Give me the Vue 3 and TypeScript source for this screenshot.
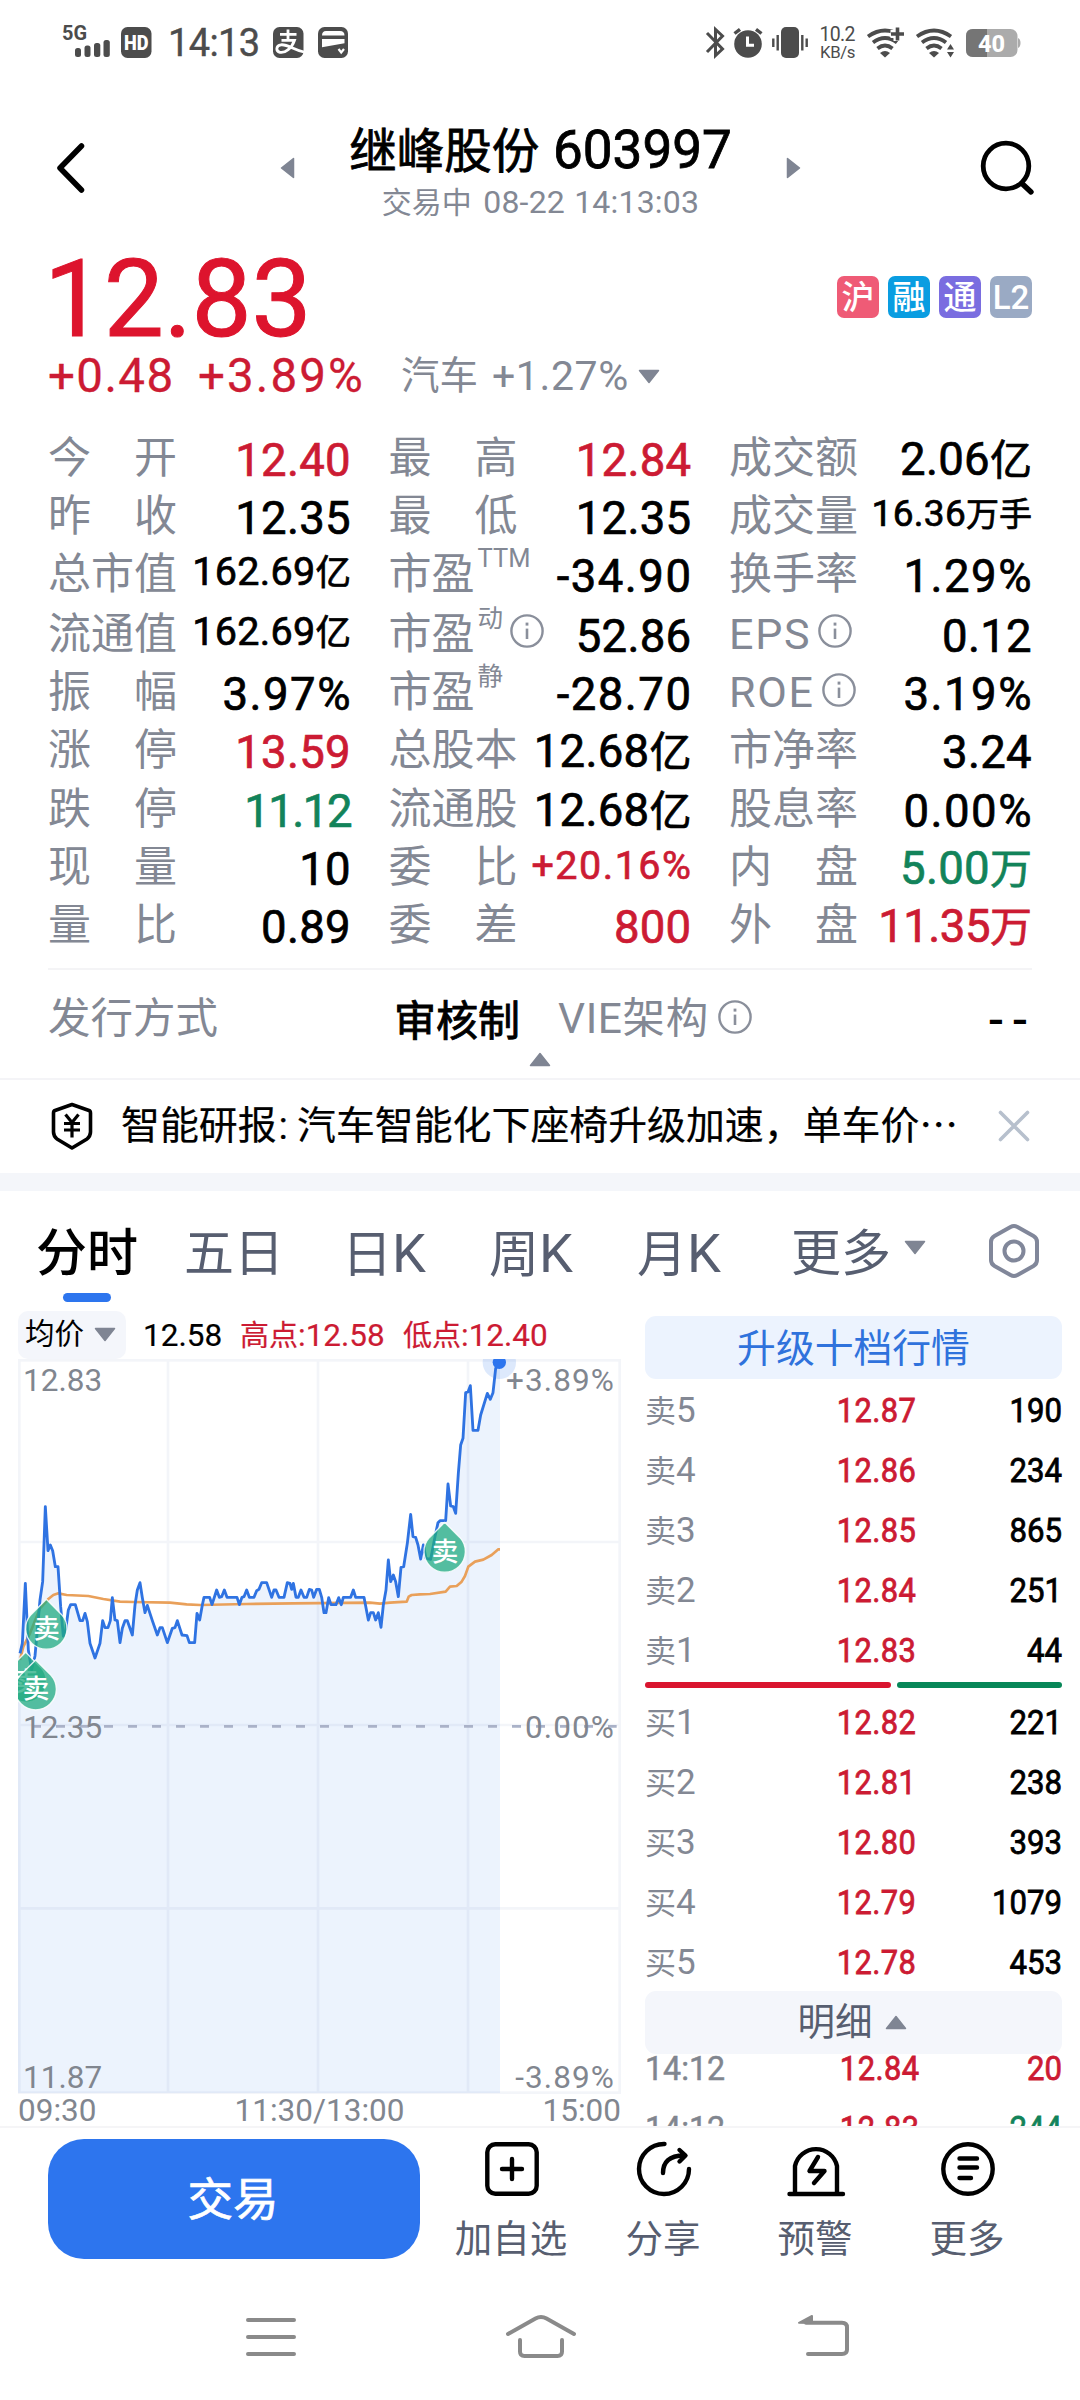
<script setup lang="ts">
import { h, type FunctionalComponent } from 'vue'

type Tone = 'up' | 'down' | ''

interface Quote {
  label: string
  sup?: string
  info?: boolean
  num: string
  unit?: string
  tone?: Tone
  size?: 'mid' | 'small'
  track?: 'loose' | 'tight' | 'snug'
}

const quotes: Quote[] = [
  { label: '今开', num: '12.40', tone: 'up' },
  { label: '最高', num: '12.84', tone: 'up' },
  { label: '成交额', num: '2.06', unit: '亿' },
  { label: '昨收', num: '12.35' },
  { label: '最低', num: '12.35' },
  { label: '成交量', num: '16.36', unit: '万手', size: 'small' },
  { label: '总市值', num: '162.69', unit: '亿', size: 'mid' },
  { label: '市盈', sup: 'TTM', num: '-34.90', track: 'loose' },
  { label: '换手率', num: '1.29%', track: 'loose' },
  { label: '流通值', num: '162.69', unit: '亿', size: 'mid' },
  { label: '市盈', sup: '动', info: true, num: '52.86' },
  { label: 'EPS', info: true, num: '0.12' },
  { label: '振幅', num: '3.97%', track: 'loose' },
  { label: '市盈', sup: '静', num: '-28.70', track: 'loose' },
  { label: 'ROE', info: true, num: '3.19%', track: 'loose' },
  { label: '涨停', num: '13.59', tone: 'up' },
  { label: '总股本', num: '12.68', unit: '亿' },
  { label: '市净率', num: '3.24' },
  { label: '跌停', num: '11.12', tone: 'down', track: 'tight' },
  { label: '流通股', num: '12.68', unit: '亿' },
  { label: '股息率', num: '0.00%', track: 'loose' },
  { label: '现量', num: '10' },
  { label: '委比', num: '+20.16%', tone: 'up', size: 'mid', track: 'loose' },
  { label: '内盘', num: '5.00', unit: '万', tone: 'down' },
  { label: '量比', num: '0.89' },
  { label: '委差', num: '800', tone: 'up' },
  { label: '外盘', num: '11.35', unit: '万', tone: 'up', track: 'snug' },
]

const isSpread = (q: Quote) => !q.sup && !q.info

const badges = [
  { text: '沪', color: '#ef5b76' },
  { text: '融', color: '#0a9de1' },
  { text: '通', color: '#7a6de0' },
  { text: 'L2', color: '#9aaac4' },
]

const tabs = [
  { text: '分时' },
  { text: '五日' },
  { text: '日', k: 'K' },
  { text: '周', k: 'K' },
  { text: '月', k: 'K' },
]

const asks = [
  ['卖', '5', '12.87', '190'],
  ['卖', '4', '12.86', '234'],
  ['卖', '3', '12.85', '865'],
  ['卖', '2', '12.84', '251'],
  ['卖', '1', '12.83', '44'],
]
const bids = [
  ['买', '1', '12.82', '221'],
  ['买', '2', '12.81', '238'],
  ['买', '3', '12.80', '393'],
  ['买', '4', '12.79', '1079'],
  ['买', '5', '12.78', '453'],
]
const ticks = [
  { time: '14:12', price: '12.84', vol: '20', tone: 'up' },
  { time: '14:12', price: '12.83', vol: '244', tone: 'down' },
]

const priceLine =
  '60,1060 67,1030 76,850 85,1050 95,1110 105,1068 112,990 120,900 128,845 136,620 144,752 151,735 158,752 166,800 174,800 182,920 190,1008 197,990 205,930 212,914 226,914 240,962 248,962 255,940 262,965 270,1030 285,1074 300,1030 308,962 315,983 324,983 331,962 337,893 345,960 352,962 360,1028 367,985 375,962 382,962 397,1005 405,915 412,870 420,848 427,893 435,938 442,916 457,962 472,1005 480,983 487,983 502,1028 517,985 525,983 532,962 546,1005 561,1007 568,1028 584,1028 591,940 599,960 607,915 612,892 629,892 636,914 650,870 658,892 665,890 673,870 681,892 711,892 718,914 726,892 732,890 740,870 748,892 762,892 770,872 777,868 785,848 800,848 815,892 822,870 828,870 837,892 852,892 862,848 870,850 875,868 880,850 888,892 895,892 903,870 912,892 920,892 928,868 935,870 941,892 950,868 958,868 965,892 972,938 978,938 986,893 993,914 1008,914 1016,893 1024,914 1030,892 1052,892 1060,870 1067,892 1092,892 1105,960 1112,938 1120,938 1127,960 1135,938 1143,982 1150,915 1158,870 1165,780 1172,845 1180,825 1187,845 1195,890 1203,802 1211,800 1222,730 1232,643 1239,710 1247,712 1254,735 1262,777 1270,735 1278,775 1292,778 1305,710 1314,668 1320,662 1337,662 1344,552 1352,618 1360,620 1367,640 1375,520 1382,435 1389,415 1397,278 1404,276 1411,257 1419,391 1434,391 1442,345 1462,280 1471,298 1479,278 1487,205 1498,190'
const areaShape = `54,2379 54,1075 ${priceLine} 1500,187 1500,2379`
const averageLine =
  '60,1080 70,1040 90,1000 120,925 145,897 160,885 175,880 200,885 265,888 310,897 360,905 400,906 510,908 560,913 600,915 740,912 880,910 1110,908 1140,911 1170,908 1220,905 1226,890 1235,885 1260,883 1290,882 1337,875 1350,860 1370,858 1385,845 1395,828 1405,800 1425,785 1450,779 1475,765 1495,748 1500,748'

const sellMarks = [
  { x: 77, y: 1057 },
  { x: 107, y: 1080 },
  { x: 139, y: 898 },
  { x: 1334, y: 667 },
]

const InfoIcon: FunctionalComponent = () =>
  h('svg', { viewBox: '0 0 34 34', width: 34, height: 34, fill: 'none', stroke: '#8a8f9b' }, [
    h('circle', { cx: 17, cy: 17, r: 15.6, 'stroke-width': 2.4 }),
    h('path', { d: 'M17 14.6V25', 'stroke-width': 2.6 }),
    h('path', { d: 'M17 8.6V11.6', 'stroke-width': 2.8 }),
  ])

const Triangle: FunctionalComponent<{ dir: 'up' | 'down' | 'left' | 'right' }> = (props) => {
  const shapes = {
    up: ['0 0 22 15', 'M11 1.5L20.5 13.5H1.5Z'],
    down: ['0 0 22 15', 'M11 13.5L1.5 1.5H20.5Z'],
    left: ['0 0 15 22', 'M1.5 11L13.5 1.5V20.5Z'],
    right: ['0 0 15 22', 'M13.5 11L1.5 1.5V20.5Z'],
  }
  const [box, d] = shapes[props.dir]
  const wide = props.dir === 'up' || props.dir === 'down'
  return h(
    'svg',
    { viewBox: box, width: wide ? 22 : 15, height: wide ? 15 : 22 },
    h('path', { d, fill: '#7f8593', stroke: '#7f8593', 'stroke-width': 1.5, 'stroke-linejoin': 'round' }),
  )
}
Triangle.props = ['dir']
</script>

<template>
  <div class="page">
    <header class="status">
      <svg class="status-left" viewBox="60 20 292 44" width="292" height="44">
        <text x="62" y="40.500" font-size="20" font-weight="700" textLength="25" lengthAdjust="spacingAndGlyphs" fill="#4c4c4c">5G</text>
        <g fill="#4c4c4c">
          <rect x="75" y="49" width="6" height="9" rx="2.500" />
          <rect x="84.500" y="46.500" width="6" height="11.500" rx="2.500" />
          <rect x="94" y="44" width="6.300" height="14" rx="2.500" />
          <rect x="103.500" y="41" width="6.300" height="17" rx="2.500" />
          <rect x="121" y="28" width="30.500" height="31" rx="6.500" />
          <rect x="273" y="28" width="30.500" height="31" rx="6.500" />
          <rect x="318" y="28" width="30" height="31" rx="6.500" />
        </g>
        <text x="124" y="50.500" font-size="19.500" font-weight="900" textLength="24.500" lengthAdjust="spacingAndGlyphs" fill="#fff">HD</text>
        <text x="168" y="57" font-size="38" textLength="92" fill="#4c4c4c" stroke="#4c4c4c" stroke-width="0.400">14:13</text>
        <g fill="none" stroke="#fff" stroke-width="2.800">
          <path d="M280 35.300H296.500M288 30.500V41M281.500 41.300H294.500C292 49 285 54.300 280 53.300C275.500 52 275.800 46.500 281 45.800C287.500 45 293 50.500 304 53" />
        </g>
        <path d="M322 36.500Q322 32 326 32H340Q344.500 32 344.500 36.500ZM322 40H344.500V44.300L322 48.300Z" fill="#fff" />
        <path d="M338.500 50L341.200 53.500L344 50" fill="none" stroke="#fff" stroke-width="2.200" />
      </svg>
      <svg class="status-right" viewBox="700 20 324 44" width="324" height="44">
        <path d="M707 34L722.500 50L715.500 56.500V30.500L722.500 37L707 53" fill="none" stroke="#4c4c4c" stroke-width="3" />
        <circle cx="748" cy="45" r="13.800" fill="#4c4c4c" />
        <path d="M734.500 34.500L740 30.300M761.500 34.500L756 30.300" stroke="#4c4c4c" stroke-width="3.400" />
        <path d="M747.500 37.500V46.300H754" fill="none" stroke="#fff" stroke-width="3" />
        <rect x="781" y="28" width="18" height="31" rx="5" fill="#4c4c4c" />
        <path d="M777.700 36V51.500M773.300 39.500V48M802.300 36V51.500M806.700 39.500V48" stroke="#4c4c4c" stroke-width="2.400" />
        <text x="819.500" y="42.300" font-size="19.500" textLength="36" fill="#4c4c4c">10.2</text>
        <text x="820" y="58.700" font-size="16.800" textLength="35.500" fill="#4c4c4c">KB/s</text>
        <g v-for="x in [885, 934]" :key="x" fill="none" stroke="#4c4c4c" stroke-width="3.800">
          <path :d="`M${x - 17} 37.500Q${x} 25.500 ${x + 17} 37.500`" />
          <path :d="`M${x - 12} 43.500Q${x} 34.500 ${x + 12} 43.500`" />
          <path :d="`M${x - 7.500} 49.500Q${x} 43.500 ${x + 7.500} 49.500`" />
          <path :d="`M${x - 5} 54Q${x} 50 ${x + 5} 54L${x} 58.500Z`" fill="#4c4c4c" stroke="none" />
        </g>
        <path d="M897.500 28V42M890.500 35H904.500" stroke="#fff" stroke-width="8" />
        <path d="M897.500 28.500V41.500M891 35H904" stroke="#4c4c4c" stroke-width="3.600" />
        <path d="M946 44H956V60H946Z" fill="#fff" />
        <path d="M950.500 45L954 50.500H947ZM950.500 58.500L947 53H954Z" fill="#4c4c4c" />
        <rect x="966" y="30" width="51.500" height="28" rx="7" fill="#ababab" />
        <path d="M987 30H973Q966 30 966 37V51Q966 58 973 58H987Z" fill="#757575" />
        <path d="M1018 39Q1020.500 40 1020.500 44T1018 49Z" fill="#ababab" />
        <text x="978" y="52.500" font-size="23.500" font-weight="800" textLength="27" fill="#fff">40</text>
      </svg>
    </header>

    <nav class="head">
      <svg class="back" viewBox="0 0 30 52" width="30" height="52">
        <path d="M25.500 4L4 26L25.500 48" fill="none" stroke="#000" stroke-width="5.500" stroke-linecap="round" stroke-linejoin="round" />
      </svg>
      <Triangle dir="left" class="prev" />
      <div class="title">
        <div class="name">继峰股份 <span class="code">603997</span></div>
        <div class="session">交易中 <span class="clock">08-22 14:13:03</span></div>
      </div>
      <Triangle dir="right" class="next" />
      <svg class="search" viewBox="0 0 56 58" width="56" height="58">
        <circle cx="26" cy="27" r="22.800" fill="none" stroke="#000" stroke-width="4.800" />
        <path d="M42.500 45L51 53" stroke="#000" stroke-width="5.400" stroke-linecap="round" />
      </svg>
    </nav>

    <section class="price">
      <div class="price-main">
        <div class="last">12.83</div>
        <div class="badges">
          <span v-for="b in badges" :key="b.text" class="badge" :style="{ background: b.color }">{{ b.text }}</span>
        </div>
      </div>
      <div class="change">
        <span class="delta">+0.48</span>
        <span class="delta pct">+3.89%</span>
        <span class="sector">汽车</span>
        <span class="sector-pct">+1.27%</span>
        <Triangle dir="down" />
      </div>
    </section>

    <section class="quotes">
      <div v-for="(q, i) in quotes" :key="i" class="cell">
        <div class="label" :class="{ spread: isSpread(q) }">
          <template v-if="isSpread(q)"><span v-for="c in q.label" :key="c">{{ c }}</span></template>
          <template v-else>
            <span :class="{ latin: !q.sup }">{{ q.label }}</span>
            <span v-if="q.sup" class="sup">{{ q.sup }}</span>
            <InfoIcon v-if="q.info" class="info" />
          </template>
        </div>
        <div class="value" :class="[q.tone, q.size, q.track]">{{ q.num }}<span v-if="q.unit" class="unit">{{ q.unit }}</span></div>
      </div>
    </section>

    <section class="extra">
      <span class="extra-label">发行方式</span>
      <span class="extra-value">审核制</span>
      <span class="extra-label vie">VIE架构</span>
      <InfoIcon class="extra-info" />
      <span class="dash">--</span>
    </section>
    <div class="fold"><Triangle dir="up" /></div>

    <section class="notice">
      <svg viewBox="0 0 42 48" width="42" height="48" fill="none" stroke="#000">
        <path d="M21 2.500L38 8.500Q39.500 9 39.500 11V30Q39.500 34 36 37L21 46L6 37Q2.500 34 2.500 30V11Q2.500 9 4 8.500Z" stroke-width="3.600" stroke-linejoin="round" />
        <path d="M14.500 12.500L21 20.500L27.500 12.500M21 20.500V35.500M13 21.500H29M13 28H29" stroke-width="3.200" />
      </svg>
      <span class="notice-text">智能研报<i class="colon">:</i>汽车智能化下座椅升级加速，单车价⋯</span>
      <svg class="close" viewBox="0 0 32 32" width="32" height="32">
        <path d="M2.500 2.500L29.500 29.500M29.500 2.500L2.500 29.500" stroke="#b7c0cd" stroke-width="3.600" stroke-linecap="round" />
      </svg>
    </section>

    <section class="tabs">
      <span v-for="(t, i) in tabs" :key="t.text" class="tab" :class="['tab' + i, { active: i === 0 }]">{{ t.text }}<em v-if="t.k">{{ t.k }}</em></span>
      <span class="tab more">更多</span>
      <Triangle dir="down" class="more-tri" />
      <svg class="gear" viewBox="0 0 52 56" width="52" height="56" fill="none" stroke="#81879a" stroke-width="4">
        <path d="M22.500 4Q26 2 29.500 4L45.500 13Q49 15 49 19V37Q49 41 45.500 43L29.500 52Q26 54 22.500 52L6.500 43Q3 41 3 37V19Q3 15 6.500 13Z" />
        <circle cx="26" cy="28" r="9.500" />
      </svg>
    </section>

    <main class="market">
      <section class="chart-col">
        <div class="legend">
          <span class="avg">均价<Triangle dir="down" class="avg-tri" /></span>
          <span class="lg l1">12.58</span>
          <span class="lg up l2"><b>高点</b>:12.58</span>
          <span class="lg up l3"><b>低点</b>:12.40</span>
        </div>
        <div class="chart">
          <svg viewBox="54 177 1809 2205" width="603" height="735">
            <g fill="none" stroke="#f3f5f9" stroke-width="8">
              <rect x="58" y="181" width="1801" height="2197" />
              <path d="M504 181V2378M954 181V2378M1404 181V2378M58 726H1859M58 1275H1859M58 1825H1859" />
            </g>
            <polygon :points="areaShape" fill="#2d75ee" fill-opacity="0.09" />
            <path d="M96 1279H1850" stroke="#aab2c8" stroke-width="8" stroke-dasharray="27 45" />
            <polyline :points="averageLine" fill="none" stroke="#e9a05a" stroke-width="8" stroke-linejoin="round" />
            <polyline :points="priceLine" fill="none" stroke="#2f73e2" stroke-width="8.500" stroke-linejoin="round" />
            <circle cx="1498" cy="187" r="50" fill="#2d75ee" fill-opacity="0.16" />
            <circle cx="1498" cy="187" r="20" fill="#2d75ee" />
            <g v-for="m in sellMarks" :key="m.x" :transform="`translate(${m.x} ${m.y})`">
              <path d="M0 0L46 46A62 62 0 1 1 -46 46Z" fill="#20ab80" fill-opacity="0.75" stroke="#fff" stroke-opacity="0.850" stroke-width="4" stroke-linejoin="round" />
              <text x="1" y="115" class="mark" text-anchor="middle" font-size="80" fill="#fff">卖</text>
            </g>
          </svg>
          <span class="axis a-tl">12.83</span>
          <span class="axis a-tr">+3.89%</span>
          <span class="axis a-ml">12.35</span>
          <span class="axis a-mr">0.00%</span>
          <span class="axis a-bl">11.87</span>
          <span class="axis a-br">-3.89%</span>
        </div>
        <div class="times"><span>09:30</span><span>11:30/13:00</span><span>15:00</span></div>
      </section>

      <section class="book">
        <div class="upgrade">升级十档行情</div>
        <div class="levels">
          <div v-for="r in asks" :key="r[2]" class="level">
            <span class="lv">{{ r[0] }}<em>{{ r[1] }}</em></span>
            <span class="lp">{{ r[2] }}</span>
            <span class="lq">{{ r[3] }}</span>
          </div>
        </div>
        <div class="ratio"><i class="sell" /><i class="buy" /></div>
        <div class="levels bids">
          <div v-for="r in bids" :key="r[2]" class="level">
            <span class="lv">{{ r[0] }}<em>{{ r[1] }}</em></span>
            <span class="lp">{{ r[2] }}</span>
            <span class="lq">{{ r[3] }}</span>
          </div>
        </div>
        <div class="detail">明细<Triangle dir="up" class="detail-tri" /></div>
        <div class="ticks">
          <div v-for="(t, i) in ticks" :key="i" class="level tick">
            <span class="tt">{{ t.time }}</span>
            <span class="lp">{{ t.price }}</span>
            <span class="lq" :class="t.tone">{{ t.vol }}</span>
          </div>
        </div>
      </section>
    </main>

    <footer class="actions">
      <button class="trade">交易</button>
      <div class="action">
        <svg viewBox="0 0 60 60" width="60" height="60">
          <rect x="5.300" y="5.300" width="49.400" height="49.400" rx="8" />
          <path d="M30 20V40M20 30H40" />
        </svg>
        <span>加自选</span>
      </div>
      <div class="action">
        <svg viewBox="0 0 60 60" width="60" height="60">
          <path d="M30.500 5A25 25 0 1 0 55 30" />
          <path d="M29 34C29 23 35 16.500 50 16.500M45.500 11L51.500 16.500L45.500 22.500" />
        </svg>
        <span>分享</span>
      </div>
      <div class="action">
        <svg viewBox="0 0 60 60" width="60" height="60">
          <path d="M9 55V27A21.500 21.500 0 0 1 51 27V55M3.500 55H57M32 18L23.500 32H38.500L28 44" />
        </svg>
        <span>预警</span>
      </div>
      <div class="action">
        <svg viewBox="0 0 60 60" width="60" height="60">
          <circle cx="30" cy="30" r="24.700" />
          <path d="M21.500 19.500H39M21.500 28.500H39M21.500 39H33" />
        </svg>
        <span>更多</span>
      </div>
    </footer>

    <nav class="system">
      <svg viewBox="246 2310 604 52" width="604" height="52" fill="none" stroke="#8a8a8a" stroke-width="4" stroke-linecap="round" stroke-linejoin="round">
        <path d="M248 2320H294M248 2337H294M248 2354H294" />
        <path d="M508 2334L535.500 2318.500Q541 2315.500 546.500 2318.500L574 2334M520 2340V2351.500Q520 2356 524.500 2356H557.500Q562 2356 562 2351.500V2340" />
        <path d="M806 2322.800H842Q847 2322.800 847 2327.500V2349.500Q847 2354 842 2354H808" />
        <path d="M799 2322.800L812 2316V2323Z" fill="#8a8a8a" stroke-width="2" />
      </svg>
    </nav>
  </div>
</template>

<style>
body {
  background: #fff;
}
</style>

<style scoped>
.page {
  width: 1080px;
  height: 2400px;
  overflow: hidden;
  background: #fff;
  color: #000;
  font-family: Roboto, 'Noto Sans CJK SC', sans-serif;
  font-size: 43px;
  display: flex;
  flex-direction: column;
}
.page * {
  box-sizing: border-box;
}
svg {
  display: block;
  flex: none;
}
span {
  white-space: nowrap;
}
.status {
  height: 84px;
  padding: 19px 56px 0 60px;
  display: flex;
  justify-content: space-between;
}
.head {
  height: 156px;
  display: flex;
  align-items: flex-start;
}
.back {
  margin: 58px 0 0 56px;
}
.prev {
  margin: 73px 0 0 194px;
}
.title {
  width: 491px;
  text-align: center;
}
.name {
  margin-top: 35px;
  height: 62px;
  line-height: 62px;
  font-size: 47.500px;
  word-spacing: 2px;
  -webkit-text-stroke: 0.8px #000;
}
.code {
  font-size: 53px;
}
.session {
  margin-top: 3px;
  height: 36px;
  line-height: 36px;
  font-size: 30px;
  word-spacing: 4px;
  color: #838894;
}
.clock {
  font-size: 32px;
  letter-spacing: 0.2px;
  word-spacing: 1px;
}
.next {
  margin-top: 73px;
}
.search {
  margin: 55px 0 0 179px;
}
.price-main {
  height: 116px;
  display: flex;
  justify-content: space-between;
  padding: 0 48px 0 48px;
}
.last {
  margin-left: -4px;
  font-size: 107px;
  line-height: 116px;
  margin-top: 2px;
  letter-spacing: -0.3px;
  color: #dd142d;
  -webkit-text-stroke: 1px #dd142d;
}
.badges {
  display: flex;
  gap: 9px;
  margin-top: 36px;
}
.badge {
  width: 42px;
  height: 42px;
  border-radius: 7px;
  color: #fff;
  font-size: 33px;
  line-height: 43px;
  font-weight: 500;
  text-align: center;
}
.change {
  height: 71.500px;
  padding: 0 0 31px 48px;
  display: flex;
  align-items: center;
  color: #838894;
}
.delta {
  width: 150px;
  font-size: 47.500px;
  line-height: 40px;
  letter-spacing: 1.400px;
  color: #cc1b33;
  -webkit-text-stroke: 0.300px #cc1b33;
}
.pct {
  width: 203px;
  letter-spacing: 2.100px;
}
.sector {
  width: 91px;
  font-size: 38.500px;
  line-height: 40px;
}
.sector-pct {
  font-size: 41px;
  line-height: 40px;
  margin-right: 9px;
  letter-spacing: 0.600px;
}
.quotes {
  height: 540px;
  padding: 0 48px;
  display: grid;
  grid-template-columns: repeat(3, 303px);
  column-gap: 37.500px;
  grid-template-rows: 58px 58px 58px 62px 55px 60px 58px 58px 58px;
}
.cell {
  display: flex;
  align-items: center;
  justify-content: space-between;
}
.label {
  display: flex;
  align-items: center;
  color: #838894;
  font-size: 43px;
  line-height: 50px;
  padding-top: 2px;
}
.spread {
  width: 129px;
  justify-content: space-between;
}
.latin {
  letter-spacing: 1.700px;
}
.sup {
  font-size: 25.500px;
  line-height: 26px;
  margin: 0 0 32px 3px;
}
.info {
  margin: 0 0 5px 7px;
}
.value {
  font-size: 45.500px;
  line-height: 46px;
  padding-top: 8px;
  letter-spacing: 0.300px;
  -webkit-text-stroke: 0.700px currentColor;
  white-space: nowrap;
}
.unit {
  font-size: 42px;
  letter-spacing: 0;
}
.mid {
  font-size: 39.500px;
  padding-top: 0;
}
.mid .unit {
  font-size: 35.500px;
}
.small {
  font-size: 37px;
  padding-top: 0;
}
.small .unit {
  font-size: 33px;
}
.loose {
  letter-spacing: 1.500px;
  margin-right: -1px;
}
.snug {
  letter-spacing: -0.500px;
}
.tight {
  letter-spacing: -1.500px;
}
.up {
  color: #cc1b33;
}
.down {
  color: #12835a;
}
.extra {
  margin: 0 48px;
  height: 84px;
  border-top: 2px solid #f4f4f6;
  display: flex;
  align-items: center;
  padding-top: 16px;
}
.extra-label {
  color: #838894;
  font-size: 42.500px;
  line-height: 50px;
  width: 346px;
}
.extra-value {
  font-size: 42px;
  -webkit-text-stroke: 0.900px #000;
  line-height: 50px;
  padding-top: 6px;
  width: 164px;
}
.extra-label.vie {
  width: auto;
  letter-spacing: 0.600px;
}
.extra-info {
  margin: 0 0 4px 9px;
}
.dash {
  margin-left: auto;
  font-weight: 500;
  font-size: 47px;
  letter-spacing: 8px;
  padding-top: 2px;
  margin-right: -4px;
}
.fold {
  height: 28px;
  display: flex;
  justify-content: center;
  border-bottom: 2px solid #f4f4f7;
}
.notice {
  height: 93px;
  display: flex;
  align-items: center;
  padding: 0 50px 0 51px;
}
.notice-text {
  margin-left: 28px;
  font-size: 38.900px;
  line-height: 50px;
  flex: 1;
  -webkit-text-stroke: 0.200px #000;
}
.colon {
  display: inline-block;
  width: 20.500px;
  padding-left: 2px;
  font-style: normal;
}
.tabs {
  border-top: 18px solid #f4f6fa;
  height: 138px;
  display: flex;
  align-items: flex-start;
  padding-left: 37px;
}
.tab {
  font-size: 50px;
  line-height: 60px;
  height: 102px;
  margin-top: 33px;
  color: #575e70;
}
.tab em {
  font-style: normal;
  font-size: 54px;
}
.active {
  color: #000;
  font-size: 51px;
  font-weight: 500;
  margin-left: -1px;
}
.active::after {
  content: '';
  display: block;
  width: 48px;
  height: 9px;
  border-radius: 5px;
  background: #2d75ee;
  margin: 9px 0 0 27px;
}
.tab0 {
  width: 148px;
}
.tab1 {
  width: 158px;
}
.tab2 {
  width: 147px;
}
.tab3 {
  width: 148px;
}
.tab4 {
  width: 154px;
}
.more {
  width: 113px;
}
.more-tri {
  margin-top: 49px;
}
.gear {
  margin: 32px 0 0 62px;
}
.market {
  height: 815px;
  overflow: hidden;
  display: flex;
  padding: 0 18px;
}
.chart-col {
  width: 603px;
}
.legend {
  height: 48px;
  display: flex;
  align-items: center;
}
.avg {
  width: 108px;
  height: 48px;
  padding-left: 7px;
  border-radius: 10px;
  background: #f4f6fb;
  font-size: 29.500px;
  line-height: 51px;
  display: flex;
  align-items: center;
}
.avg-tri {
  margin-left: 10px;
}
.lg {
  font-size: 31.500px;
  line-height: 40px;
  padding-top: 2px;
  -webkit-text-stroke: 0.200px currentColor;
}
.lg b {
  font-size: 29px;
  font-weight: 400;
}
.l1 {
  width: 97px;
  margin-left: 17px;
}
.l2 {
  width: 163px;
}
.chart {
  position: relative;
  height: 735px;
}
.axis {
  position: absolute;
  font-size: 31.500px;
  line-height: 36px;
  color: #81868f;
}
.a-tl,
.a-ml,
.a-bl {
  left: 5px;
}
.a-tr,
.a-mr,
.a-br {
  right: 6px;
  letter-spacing: 1.100px;
}
.a-tl,
.a-tr {
  top: 4px;
}
.a-ml,
.a-mr {
  top: 351px;
}
.a-bl,
.a-br {
  bottom: -2px;
}
.mark {
  font-weight: 500;
}
.times {
  display: flex;
  justify-content: space-between;
  font-size: 31.500px;
  line-height: 32px;
  padding-top: 1px;
  color: #81868f;
}
.book {
  margin: 5px 0 0 24px;
  width: 417px;
}
.upgrade {
  height: 63px;
  border-radius: 11px;
  background: #ecf3fe;
  color: #2f72dc;
  text-align: center;
  font-size: 38.800px;
  line-height: 65px;
}
.levels {
  padding-top: 2px;
}
.level {
  height: 60px;
  display: grid;
  grid-template-columns: 178px 107px 1fr;
  align-items: center;
  line-height: 40px;
}
.lv {
  color: #838894;
  font-size: 31px;
  padding-top: 1px;
}
.lv em {
  font-style: normal;
  font-size: 35px;
}
.lp,
.lq,
.tt {
  font-size: 33.500px;
}
.lp,
.lq {
  -webkit-text-stroke: 0.800px currentColor;
}
.lp {
  color: #cc1b33;
  text-align: center;
  letter-spacing: 0.500px;
  transform: scaleX(0.92);
}
.lq {
  text-align: right;
  transform: scaleX(0.93);
  transform-origin: right;
}
.ratio {
  margin-top: 1px;
  height: 6px;
  display: flex;
  gap: 6px;
}
.ratio i {
  height: 6px;
  border-radius: 3px;
}
.sell {
  flex: 246;
  background: #d9152f;
}
.buy {
  flex: 165;
  background: #078758;
}
.bids {
  padding-top: 5px;
}
.detail {
  margin-top: -2px;
  height: 63px;
  border-radius: 11px;
  background: #f4f6fb;
  color: #575e70;
  font-size: 37.500px;
  line-height: 66px;
  display: flex;
  justify-content: center;
  align-items: center;
  padding-right: 3px;
}
.detail-tri {
  margin-left: 12px;
}
.ticks {
  margin-top: -15px;
}
.tt {
  color: #81868f;
  transform: scaleX(0.96);
  transform-origin: left;
  -webkit-text-stroke: 0.500px #81868f;
}
.tick .lp {
  padding-left: 7px;
}
.actions {
  height: 154px;
  border-top: 2px solid #f5f5f7;
  display: flex;
  align-items: flex-start;
  padding-left: 48px;
}
.trade {
  margin: 11px 16px 0 0;
  width: 372px;
  height: 120px;
  border: 0;
  border-radius: 36px;
  background: #2d75ee;
  color: #fff;
  font: 400 45.500px/124px Roboto, 'Noto Sans CJK SC', sans-serif;
  -webkit-text-stroke: 0.700px #fff;
  padding: 0 2px 0 0;
}
.action {
  width: 152px;
  margin-top: 11px;
  display: flex;
  flex-direction: column;
  align-items: center;
}
.action svg {
  fill: none;
  stroke: #000;
  stroke-width: 4.400px;
  stroke-linecap: round;
  stroke-linejoin: round;
}
.action span {
  margin: 18px 2px 0 0;
  font-size: 37.500px;
  line-height: 44px;
  color: #575e70;
}
.system {
  padding: 30px 0 0 246px;
}
</style>
